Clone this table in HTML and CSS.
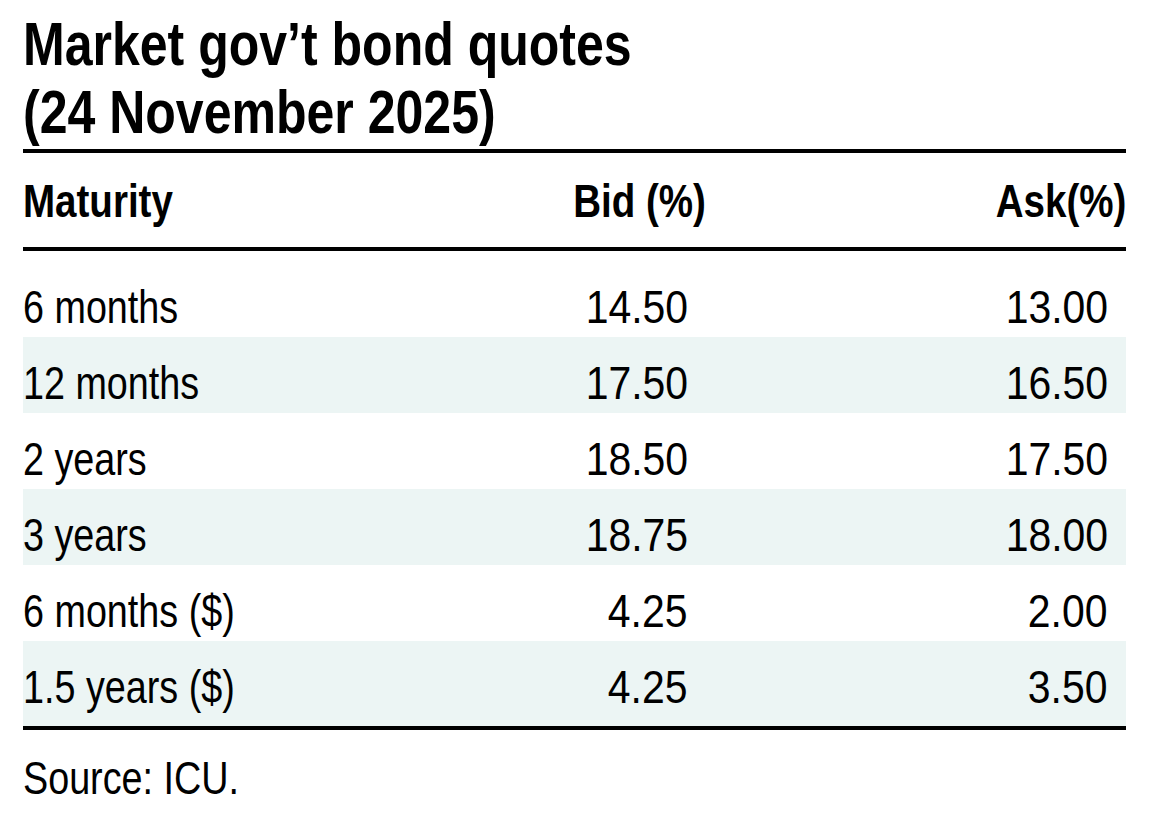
FILE: index.html
```html
<!DOCTYPE html>
<html lang="en">
<head>
<meta charset="utf-8">
<title>Market gov't bond quotes</title>
<link rel="stylesheet" href="styles.css">
</head>
<body>
<div class="page">
  <h1 class="title"><span class="t">Market gov’t bond quotes<br>(24 November 2025)</span></h1>
  <div class="table">
    <div class="row head">
      <div class="c-mat"><span class="t">Maturity</span></div>
      <div class="c-num"><span class="t">Bid (%)</span></div>
      <div class="c-num"><span class="t">Ask(%)</span></div>
    </div>
    <div class="body">
      <div class="row"><div class="c-mat"><span class="t">6 months</span></div><div class="c-num val"><span class="t">14.50</span></div><div class="c-num val"><span class="t">13.00</span></div></div>
      <div class="row alt"><div class="c-mat"><span class="t">12 months</span></div><div class="c-num val"><span class="t">17.50</span></div><div class="c-num val"><span class="t">16.50</span></div></div>
      <div class="row"><div class="c-mat"><span class="t">2 years</span></div><div class="c-num val"><span class="t">18.50</span></div><div class="c-num val"><span class="t">17.50</span></div></div>
      <div class="row alt"><div class="c-mat"><span class="t">3 years</span></div><div class="c-num val"><span class="t">18.75</span></div><div class="c-num val"><span class="t">18.00</span></div></div>
      <div class="row"><div class="c-mat"><span class="t">6 months ($)</span></div><div class="c-num val"><span class="t">4.25</span></div><div class="c-num val"><span class="t">2.00</span></div></div>
      <div class="row alt last"><div class="c-mat"><span class="t">1.5 years ($)</span></div><div class="c-num val"><span class="t">4.25</span></div><div class="c-num val"><span class="t">3.50</span></div></div>
    </div>
  </div>
  <p class="source"><span class="t">Source: ICU.</span></p>
</div>
</body>
</html>
```
FILE: styles.css
```css
html, body {
  margin: 0;
  padding: 0;
  background: #ffffff;
}
body {
  font-family: "Liberation Sans", Arial, sans-serif;
  color: #000000;
}
.page {
  padding: 10px 23px 0 23px;
}
.t {
  display: inline-block;
  white-space: nowrap;
  transform: scaleX(0.82);
  transform-origin: left center;
}
.c-num .t {
  transform-origin: right center;
}
.c-num.val .t {
  transform: scaleX(0.89);
}
.title {
  margin: 0;
  font-size: 61px;
  line-height: 68px;
  font-weight: 700;
  padding-bottom: 3px;
  border-bottom: 4px solid #000;
}
.title .t {
  white-space: normal;
}
.table {
  border-bottom: 4px solid #000;
}
.row {
  display: grid;
  grid-template-columns: 1fr 420px 420px;
  box-sizing: border-box;
  height: 76px;
  padding-top: 20px;
  font-size: 46px;
  line-height: 52px;
}
.row.head {
  height: 98px;
  padding-top: 22px;
  font-size: 47px;
  font-weight: 700;
  border-bottom: 4px solid #000;
}
.body {
  padding-top: 10px;
}
.row.alt {
  background: #ecf5f4;
}
.row.last {
  height: 85px;
}
.c-num {
  text-align: right;
}
.c-num.val {
  padding-right: 18px;
}
.source {
  margin: 22px 0 0 0;
  font-size: 46px;
  line-height: 52px;
}
```
